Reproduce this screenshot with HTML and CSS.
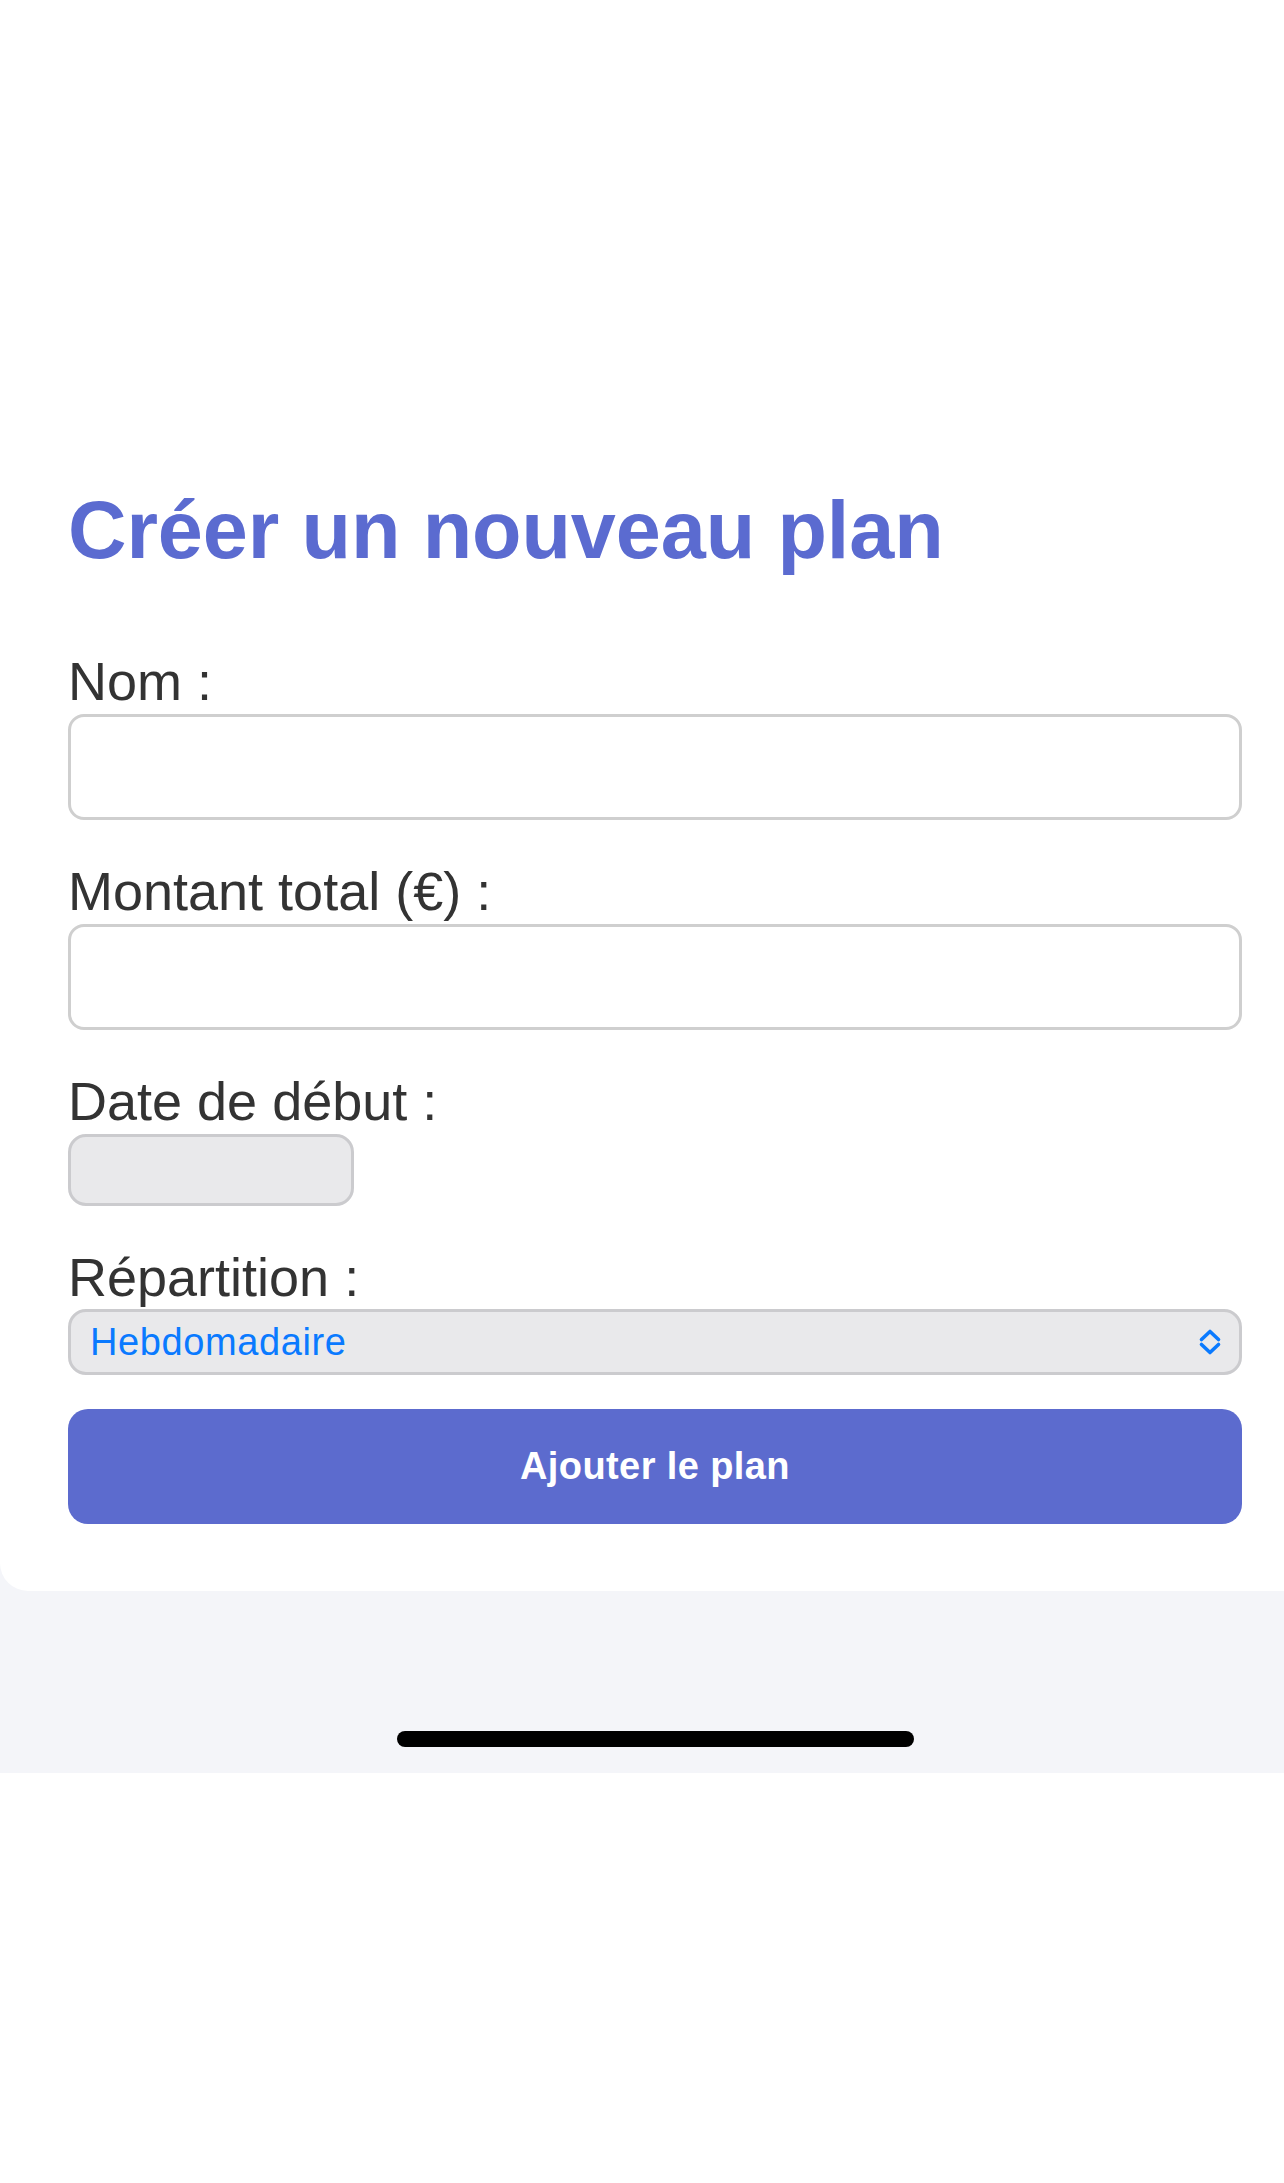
FILE: index.html
```html
<!DOCTYPE html>
<html lang="fr">
<head>
<meta charset="utf-8">
<title>Créer un nouveau plan</title>
<link rel="stylesheet" href="styles.css">
</head>
<body>
<div class="screen">
  <main class="card">
    <h1 class="title">Créer un nouveau plan</h1>
    <form class="form">
      <div class="field">
        <label class="label" for="nom">Nom :</label>
        <input class="text-input" id="nom" type="text">
      </div>
      <div class="field">
        <label class="label" for="montant">Montant total (€) :</label>
        <input class="text-input" id="montant" type="text">
      </div>
      <div class="field">
        <label class="label" for="date">Date de début :</label>
        <input class="date-input" id="date" type="text">
      </div>
      <div class="field field-select">
        <label class="label">Répartition :</label>
        <div class="select">
          <span class="select-value">Hebdomadaire</span>
          <svg class="select-chevron" width="26" height="28" viewBox="0 0 26 28" aria-hidden="true">
            <path d="M4.5 11.5 L13 3.5 L21.5 11.5" fill="none" stroke="#0a7aff" stroke-width="3.6" stroke-linecap="round" stroke-linejoin="round"/>
            <path d="M4.5 16.5 L13 24.5 L21.5 16.5" fill="none" stroke="#0a7aff" stroke-width="3.6" stroke-linecap="round" stroke-linejoin="round"/>
          </svg>
        </div>
      </div>
      <button class="submit" type="button">Ajouter le plan</button>
    </form>
  </main>
  <div class="home-area">
    <div class="home-bar"></div>
  </div>
</div>
</body>
</html>
```
FILE: styles.css
```css
html, body {
  margin: 0;
  padding: 0;
  background: #ffffff;
  overflow-x: hidden;
}

body {
  font-family: "Liberation Sans", Arial, sans-serif;
}

.screen {
  width: 1310px;
  background: #f4f5f9;
  display: flex;
  flex-direction: column;
}

.card {
  background: #ffffff;
  border-radius: 0 0 28px 28px;
  padding: 490px 68px 67px 68px;
  display: flex;
  flex-direction: column;
}

.title {
  margin: 0 0 83px 0;
  font-size: 81px;
  line-height: 81px;
  font-weight: 700;
  color: #5b6bd0;
  letter-spacing: -0.1px;
}

.form {
  display: flex;
  flex-direction: column;
  margin: 0;
}

.field {
  display: flex;
  flex-direction: column;
  align-items: flex-start;
  gap: 6px;
  margin-bottom: 44px;
}

.field-select {
  gap: 5px;
  margin-bottom: 34px;
}

.label {
  font-size: 54px;
  line-height: 54px;
  color: #333333;
}

.text-input {
  -webkit-appearance: none;
  appearance: none;
  box-sizing: border-box;
  width: 100%;
  height: 106px;
  margin: 0;
  padding: 0 20px;
  background: #ffffff;
  border: 3px solid #cfcfcf;
  border-radius: 16px;
  font: inherit;
  outline: none;
}

.date-input {
  -webkit-appearance: none;
  appearance: none;
  box-sizing: border-box;
  width: 286px;
  height: 72px;
  margin: 0;
  padding: 0;
  background: #e9e9eb;
  border: 3px solid #cbcbce;
  border-radius: 18px;
  font: inherit;
  outline: none;
}

.select {
  box-sizing: border-box;
  width: 100%;
  height: 66px;
  display: flex;
  align-items: center;
  justify-content: space-between;
  padding: 0 16px 0 19px;
  background: #e9e9eb;
  border: 3px solid #cbcbce;
  border-radius: 18px;
}

.select-value {
  font-size: 38px;
  line-height: 1;
  color: #0a7aff;
  letter-spacing: 0.6px;
}

.select-chevron {
  display: block;
  flex: none;
}

.submit {
  box-sizing: border-box;
  width: 100%;
  height: 115px;
  margin: 0;
  padding: 0;
  border: none;
  border-radius: 20px;
  background: #5c6bce;
  color: #ffffff;
  font-family: "Liberation Sans", Arial, sans-serif;
  font-size: 38px;
  font-weight: 700;
  letter-spacing: 0.4px;
  cursor: pointer;
}

.home-area {
  height: 182px;
  box-sizing: border-box;
  padding-top: 140px;
  display: flex;
  justify-content: center;
}

.home-bar {
  width: 517px;
  height: 16px;
  border-radius: 8px;
  background: #000000;
}
```
